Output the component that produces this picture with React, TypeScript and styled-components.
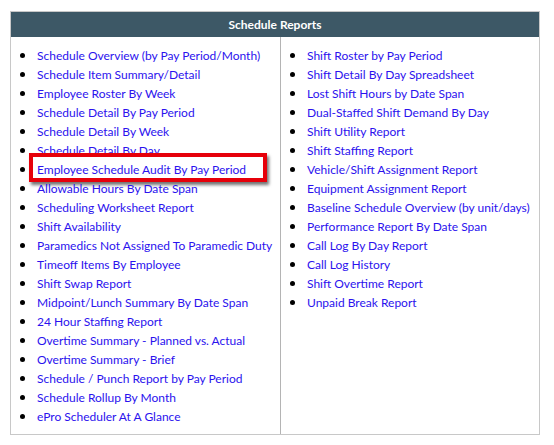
import React from "react";
import styled, { createGlobalStyle } from "styled-components";

const GlobalStyle = createGlobalStyle`
  html, body {
    margin: 0;
    padding: 0;
    background: #fff;
  }
  body {
    font-family: Lato, "Open Sans", sans-serif;
  }
`;

const Page = styled.div`
  padding: 11px 14px 0 10px;
`;

const Panel = styled.div`
  width: 528px;
  border: 1px solid #c8c8c8;
`;

const Header = styled.div`
  height: 25px;
  background: #3d5866;
  color: #fff;
  font-weight: bold;
  font-size: 12px;
  line-height: 25px;
  text-align: center;
`;

const Columns = styled.div`
  display: grid;
  grid-template-columns: 270px 1fr;
`;

const Column = styled.div<{ divider?: boolean }>`
  border-right: ${(p) => (p.divider ? "1px solid #b4b4b4" : "none")};
  padding: 9px 0 8px 0;
`;

const List = styled.ul`
  list-style: none;
  margin: 0;
  padding: 0;
  display: flex;
  flex-direction: column;
`;

const Item = styled.li`
  position: relative;
  display: flex;
  align-items: center;
  gap: 12px;
  height: 19px;
  padding-left: 9px;
  font-size: 12px;
  white-space: nowrap;
`;

const Bullet = styled.span`
  flex: none;
  width: 5px;
  height: 5px;
  border-radius: 50%;
  background: #000;
`;

const ReportLink = styled.a`
  color: #2b12ee;
  text-decoration: none;
  cursor: pointer;
`;

// red call-out frame drawn over the row
const Highlight = styled.span`
  position: absolute;
  left: 18px;
  top: -7px;
  width: 230px;
  height: 21px;
  border: 4px solid #e6000a;
  box-shadow: 2px 3px 3px rgba(0, 0, 0, 0.55);
  pointer-events: none;
`;

const leftReports = [
  "Schedule Overview (by Pay Period/Month)",
  "Schedule Item Summary/Detail",
  "Employee Roster By Week",
  "Schedule Detail By Pay Period",
  "Schedule Detail By Week",
  "Schedule Detail By Day",
  "Employee Schedule Audit By Pay Period",
  "Allowable Hours By Date Span",
  "Scheduling Worksheet Report",
  "Shift Availability",
  "Paramedics Not Assigned To Paramedic Duty",
  "Timeoff Items By Employee",
  "Shift Swap Report",
  "Midpoint/Lunch Summary By Date Span",
  "24 Hour Staffing Report",
  "Overtime Summary - Planned vs. Actual",
  "Overtime Summary - Brief",
  "Schedule / Punch Report by Pay Period",
  "Schedule Rollup By Month",
  "ePro Scheduler At A Glance",
];

const rightReports = [
  "Shift Roster by Pay Period",
  "Shift Detail By Day Spreadsheet",
  "Lost Shift Hours by Date Span",
  "Dual-Staffed Shift Demand By Day",
  "Shift Utility Report",
  "Shift Staffing Report",
  "Vehicle/Shift Assignment Report",
  "Equipment Assignment Report",
  "Baseline Schedule Overview (by unit/days)",
  "Performance Report By Date Span",
  "Call Log By Day Report",
  "Call Log History",
  "Shift Overtime Report",
  "Unpaid Break Report",
];

const highlighted = "Employee Schedule Audit By Pay Period";

const ReportList = ({ items }: { items: string[] }) => (
  <List>
    {items.map((name) => (
      <Item key={name}>
        <Bullet />
        <ReportLink>{name}</ReportLink>
        {name === highlighted && <Highlight />}
      </Item>
    ))}
  </List>
);

const App = () => {
  return (
    <>
      <GlobalStyle />
      <Page>
        <Panel>
          <Header>Schedule Reports</Header>
          <Columns>
            <Column divider>
              <ReportList items={leftReports} />
            </Column>
            <Column>
              <ReportList items={rightReports} />
            </Column>
          </Columns>
        </Panel>
      </Page>
    </>
  );
};

export default App;
